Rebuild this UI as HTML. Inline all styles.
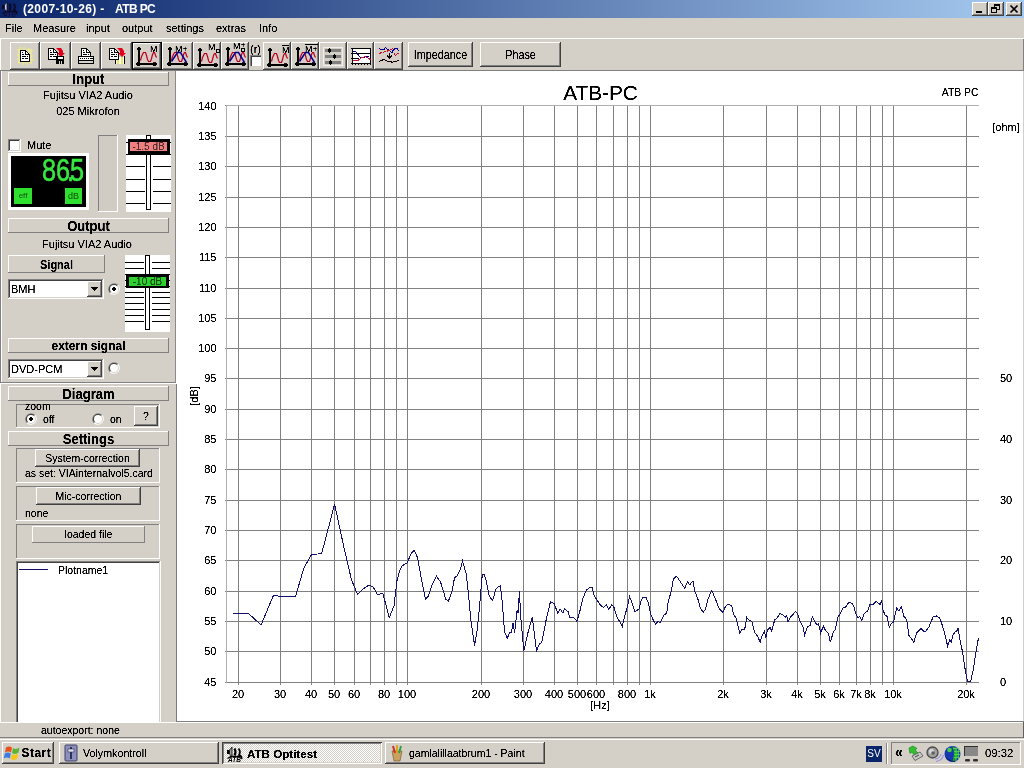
<!DOCTYPE html>
<html><head><meta charset="utf-8"><title>ATB PC</title>
<style>
html,body{margin:0;padding:0}
body{width:1024px;height:768px;position:relative;overflow:hidden;background:#d4d0c8;font-family:"Liberation Sans",sans-serif;font-size:11px;color:#000}
div,svg{position:absolute;box-sizing:border-box}
.t{white-space:nowrap;line-height:1;filter:url(#tf)}
text{filter:url(#tf)}
.b{font-weight:bold}
.r{background:#d4d0c8;box-shadow:inset -1px -1px #404040,inset 1px 1px #fff,inset -2px -2px #808080,inset 2px 2px #d4d0c8}
.p{background:#d4d0c8;box-shadow:inset 1px 1px #404040,inset -1px -1px #fff,inset 2px 2px #808080,inset -2px -2px #d4d0c8}
.s{background:#fff;box-shadow:inset -1px -1px #fff,inset 1px 1px #808080,inset -2px -2px #d4d0c8,inset 2px 2px #404040}
.h{background:#d4d0c8;box-shadow:inset -1px -1px #808080,inset 1px 1px #fff}
.g{box-shadow:inset -1px -1px #fff,inset 1px 1px #808080}
.c{text-align:center}
</style></head><body><div id="w" style="left:0;top:0;width:1024px;height:768px;will-change:transform"><svg width="0" height="0" style="left:0;top:0"><defs><filter id="tf" x="-5%" y="-20%" width="110%" height="140%" color-interpolation-filters="sRGB"><feComponentTransfer><feFuncA type="linear" slope="2.5" intercept="-0.5"/></feComponentTransfer></filter></defs></svg>
<div class="" style="left:0px;top:0px;width:1024px;height:18px;background:linear-gradient(to right,#0a246a 0%,#a6caf0 100%)"></div>
<svg style="left:2px;top:1px" width="17" height="17" viewBox="0 0 17 17"><rect x="0" y="4" width="2.5" height="4" fill="#0a0a28"/><path d="M2.5 4 L5 1 L5 11 L2.5 8Z" fill="#c8c8e0" stroke="#0a0a28" stroke-width="0.8"/><path d="M7.5 2.5 Q9.5 6 7.5 9.5" fill="none" stroke="#0a0a28" stroke-width="2.2"/><path d="M11.5 2.5 Q14 5.5 12 9 Q15 10 14.5 13" fill="none" stroke="#0a0a28" stroke-width="1.8"/><path d="M0.5 12.5 L4 10.5 L13 10.5" fill="none" stroke="#0a0a28" stroke-width="1.3"/><text x="1" y="16.4" font-size="6.5" font-weight="bold" font-style="italic" fill="#10103a" style="filter:none" font-family="Liberation Sans, sans-serif">ATB</text></svg>
<div class="t b" style="left:23px;top:3px;color:#fff;font-size:12px;letter-spacing:0.35px;filter:none">(2007-10-26) -&nbsp; <span style="margin-left:3px;letter-spacing:-0.6px">ATB PC</span></div>
<div class="r" style="left:972px;top:2px;width:16px;height:14px;"></div>
<div class="r" style="left:988px;top:2px;width:16px;height:14px;"></div>
<div class="r" style="left:1006px;top:2px;width:16px;height:14px;"></div>
<svg style="left:972px;top:2px" width="50" height="14" viewBox="0 0 50 14" shape-rendering="crispEdges"><rect x="4" y="9" width="6" height="2" fill="#000"/><rect x="22.5" y="2.5" width="5" height="5" fill="none" stroke="#000"/><rect x="22" y="2" width="6" height="2" fill="#000"/><rect x="19.5" y="5.5" width="5" height="5" fill="#d4d0c8" stroke="#000"/><rect x="19" y="5" width="6" height="2" fill="#000"/><path d="M38.5 3.5l7 7M45.5 3.5l-7 7" stroke="#000" stroke-width="1.7" fill="none" shape-rendering="auto"/></svg>
<div class="t" style="left:5px;top:23px;font-size:11px">File</div>
<div class="t" style="left:33px;top:23px;font-size:11px">Measure</div>
<div class="t" style="left:86px;top:23px;font-size:11px">input</div>
<div class="t" style="left:122px;top:23px;font-size:11px">output</div>
<div class="t" style="left:166px;top:23px;font-size:11px">settings</div>
<div class="t" style="left:216px;top:23px;font-size:11px">extras</div>
<div class="t" style="left:259px;top:23px;font-size:11px">Info</div>
<div class="" style="left:0px;top:38px;width:1024px;height:1px;background:#fff"></div>
<div class="" style="left:0px;top:70px;width:1024px;height:1px;background:#808080"></div>
<div class="" style="left:0px;top:39px;width:1px;height:31px;background:#fff"></div>
<div class="" style="left:1023px;top:39px;width:1px;height:31px;background:#808080"></div>
<div class="r" style="left:10px;top:42px;width:30px;height:28px;"></div>
<div class="r" style="left:40px;top:42px;width:31px;height:28px;"></div>
<div class="r" style="left:71px;top:42px;width:30px;height:28px;"></div>
<div class="r" style="left:101px;top:42px;width:31px;height:28px;"></div>
<div class="" style="left:132px;top:42px;width:30px;height:28px;background:#000"></div>
<div class="r" style="left:133px;top:43px;width:28px;height:26px;"></div>
<div class="r" style="left:162px;top:42px;width:31px;height:28px;"></div>
<div class="r" style="left:193px;top:42px;width:28px;height:28px;"></div>
<div class="r" style="left:221px;top:42px;width:28px;height:28px;"></div>
<div class="r" style="left:263px;top:42px;width:28px;height:28px;"></div>
<div class="r" style="left:291px;top:42px;width:28px;height:28px;"></div>
<div class="r" style="left:319px;top:42px;width:28px;height:28px;"></div>
<div class="r" style="left:347px;top:42px;width:27px;height:28px;"></div>
<div class="r" style="left:374px;top:42px;width:29px;height:28px;"></div>
<svg style="left:10px;top:42px" width="30" height="28" viewBox="10 42 30 28" shape-rendering="crispEdges" font-family="Liberation Sans, sans-serif"><g opacity="0.55"><rect x="17" y="49" width="2" height="2" fill="#f2f260"/><rect x="19" y="47" width="2" height="2" fill="#f2f260"/><rect x="23" y="47" width="2" height="2" fill="#f2f260"/><rect x="28" y="48" width="2" height="2" fill="#f2f260"/><rect x="31" y="50" width="2" height="2" fill="#f2f260"/><rect x="31" y="55" width="2" height="2" fill="#f2f260"/><rect x="32" y="59" width="2" height="2" fill="#f2f260"/><rect x="30" y="62" width="2" height="2" fill="#f2f260"/><rect x="26" y="63" width="2" height="2" fill="#f2f260"/><rect x="22" y="63" width="2" height="2" fill="#f2f260"/><rect x="18" y="62" width="2" height="2" fill="#f2f260"/><rect x="17" y="58" width="2" height="2" fill="#f2f260"/><rect x="17" y="54" width="2" height="2" fill="#f2f260"/></g><rect x="18" y="49" width="14" height="14" fill="#f6f68a" opacity="0.5"/><rect x="20" y="50" width="6" height="1" fill="#000"/><rect x="20" y="51" width="1" height="1" fill="#000"/><rect x="21" y="51" width="4" height="1" fill="#fff"/><rect x="25" y="51" width="2" height="1" fill="#000"/><rect x="20" y="52" width="1" height="1" fill="#000"/><rect x="21" y="52" width="1" height="1" fill="#fff"/><rect x="22" y="52" width="1" height="1" fill="#000"/><rect x="23" y="52" width="2" height="1" fill="#fff"/><rect x="25" y="52" width="1" height="1" fill="#000"/><rect x="26" y="52" width="1" height="1" fill="#fff"/><rect x="27" y="52" width="1" height="1" fill="#000"/><rect x="20" y="53" width="1" height="1" fill="#000"/><rect x="21" y="53" width="4" height="1" fill="#fff"/><rect x="25" y="53" width="1" height="1" fill="#000"/><rect x="26" y="53" width="2" height="1" fill="#fff"/><rect x="28" y="53" width="1" height="1" fill="#000"/><rect x="20" y="54" width="1" height="1" fill="#000"/><rect x="21" y="54" width="1" height="1" fill="#fff"/><rect x="22" y="54" width="2" height="1" fill="#000"/><rect x="24" y="54" width="1" height="1" fill="#fff"/><rect x="25" y="54" width="5" height="1" fill="#000"/><rect x="20" y="55" width="1" height="1" fill="#000"/><rect x="21" y="55" width="8" height="1" fill="#fff"/><rect x="29" y="55" width="1" height="1" fill="#000"/><rect x="20" y="56" width="1" height="1" fill="#000"/><rect x="21" y="56" width="1" height="1" fill="#fff"/><rect x="22" y="56" width="4" height="1" fill="#000"/><rect x="26" y="56" width="1" height="1" fill="#fff"/><rect x="27" y="56" width="1" height="1" fill="#000"/><rect x="28" y="56" width="1" height="1" fill="#fff"/><rect x="29" y="56" width="1" height="1" fill="#000"/><rect x="20" y="57" width="1" height="1" fill="#000"/><rect x="21" y="57" width="8" height="1" fill="#fff"/><rect x="29" y="57" width="1" height="1" fill="#000"/><rect x="20" y="58" width="1" height="1" fill="#000"/><rect x="21" y="58" width="1" height="1" fill="#fff"/><rect x="22" y="58" width="2" height="1" fill="#000"/><rect x="24" y="58" width="1" height="1" fill="#fff"/><rect x="25" y="58" width="3" height="1" fill="#000"/><rect x="28" y="58" width="1" height="1" fill="#fff"/><rect x="29" y="58" width="1" height="1" fill="#000"/><rect x="20" y="59" width="1" height="1" fill="#000"/><rect x="21" y="59" width="8" height="1" fill="#fff"/><rect x="29" y="59" width="1" height="1" fill="#000"/><rect x="20" y="60" width="1" height="1" fill="#000"/><rect x="21" y="60" width="8" height="1" fill="#fff"/><rect x="29" y="60" width="1" height="1" fill="#000"/><rect x="20" y="61" width="10" height="1" fill="#000"/></svg>
<svg style="left:40px;top:42px" width="31" height="28" viewBox="40 42 31 28" shape-rendering="crispEdges" font-family="Liberation Sans, sans-serif"><rect x="48" y="48" width="6" height="1" fill="#000"/><rect x="48" y="49" width="1" height="1" fill="#000"/><rect x="49" y="49" width="4" height="1" fill="#fff"/><rect x="53" y="49" width="2" height="1" fill="#000"/><rect x="48" y="50" width="1" height="1" fill="#000"/><rect x="49" y="50" width="1" height="1" fill="#fff"/><rect x="50" y="50" width="1" height="1" fill="#000"/><rect x="51" y="50" width="2" height="1" fill="#fff"/><rect x="53" y="50" width="1" height="1" fill="#000"/><rect x="54" y="50" width="1" height="1" fill="#fff"/><rect x="55" y="50" width="1" height="1" fill="#000"/><rect x="48" y="51" width="1" height="1" fill="#000"/><rect x="49" y="51" width="4" height="1" fill="#fff"/><rect x="53" y="51" width="1" height="1" fill="#000"/><rect x="54" y="51" width="2" height="1" fill="#fff"/><rect x="56" y="51" width="1" height="1" fill="#000"/><rect x="48" y="52" width="1" height="1" fill="#000"/><rect x="49" y="52" width="1" height="1" fill="#fff"/><rect x="50" y="52" width="2" height="1" fill="#000"/><rect x="52" y="52" width="1" height="1" fill="#fff"/><rect x="53" y="52" width="5" height="1" fill="#000"/><rect x="48" y="53" width="1" height="1" fill="#000"/><rect x="49" y="53" width="8" height="1" fill="#fff"/><rect x="57" y="53" width="1" height="1" fill="#000"/><rect x="48" y="54" width="1" height="1" fill="#000"/><rect x="49" y="54" width="1" height="1" fill="#fff"/><rect x="50" y="54" width="4" height="1" fill="#000"/><rect x="54" y="54" width="1" height="1" fill="#fff"/><rect x="55" y="54" width="1" height="1" fill="#000"/><rect x="56" y="54" width="1" height="1" fill="#fff"/><rect x="57" y="54" width="1" height="1" fill="#000"/><rect x="48" y="55" width="1" height="1" fill="#000"/><rect x="49" y="55" width="8" height="1" fill="#fff"/><rect x="57" y="55" width="1" height="1" fill="#000"/><rect x="48" y="56" width="1" height="1" fill="#000"/><rect x="49" y="56" width="1" height="1" fill="#fff"/><rect x="50" y="56" width="2" height="1" fill="#000"/><rect x="52" y="56" width="1" height="1" fill="#fff"/><rect x="53" y="56" width="3" height="1" fill="#000"/><rect x="56" y="56" width="1" height="1" fill="#fff"/><rect x="57" y="56" width="1" height="1" fill="#000"/><rect x="48" y="57" width="1" height="1" fill="#000"/><rect x="49" y="57" width="8" height="1" fill="#fff"/><rect x="57" y="57" width="1" height="1" fill="#000"/><rect x="48" y="58" width="1" height="1" fill="#000"/><rect x="49" y="58" width="8" height="1" fill="#fff"/><rect x="57" y="58" width="1" height="1" fill="#000"/><rect x="48" y="59" width="10" height="1" fill="#000"/><path d="M56 48h5l2 3v2h2l-4 4-4-4h2v-2z" fill="#e0001c" shape-rendering="auto"/><rect x="56" y="56" width="8" height="8" fill="#000"/><rect x="58" y="57" width="5" height="2" fill="#fff"/><rect x="59" y="61" width="3" height="3" fill="#d4d0c8"/><rect x="60" y="61" width="1" height="3" fill="#000"/></svg>
<svg style="left:71px;top:42px" width="30" height="28" viewBox="71 42 30 28" shape-rendering="crispEdges" font-family="Liberation Sans, sans-serif"><rect x="81" y="48" width="6" height="1" fill="#000"/><rect x="81" y="49" width="1" height="1" fill="#000"/><rect x="82" y="49" width="4" height="1" fill="#fff"/><rect x="86" y="49" width="2" height="1" fill="#000"/><rect x="81" y="50" width="1" height="1" fill="#000"/><rect x="82" y="50" width="1" height="1" fill="#fff"/><rect x="83" y="50" width="1" height="1" fill="#000"/><rect x="84" y="50" width="2" height="1" fill="#fff"/><rect x="86" y="50" width="1" height="1" fill="#000"/><rect x="87" y="50" width="1" height="1" fill="#fff"/><rect x="88" y="50" width="1" height="1" fill="#000"/><rect x="81" y="51" width="1" height="1" fill="#000"/><rect x="82" y="51" width="4" height="1" fill="#fff"/><rect x="86" y="51" width="1" height="1" fill="#000"/><rect x="87" y="51" width="2" height="1" fill="#fff"/><rect x="89" y="51" width="1" height="1" fill="#000"/><rect x="81" y="52" width="1" height="1" fill="#000"/><rect x="82" y="52" width="1" height="1" fill="#fff"/><rect x="83" y="52" width="2" height="1" fill="#000"/><rect x="85" y="52" width="1" height="1" fill="#fff"/><rect x="86" y="52" width="5" height="1" fill="#000"/><rect x="81" y="53" width="1" height="1" fill="#000"/><rect x="82" y="53" width="8" height="1" fill="#fff"/><rect x="90" y="53" width="1" height="1" fill="#000"/><rect x="81" y="54" width="1" height="1" fill="#000"/><rect x="82" y="54" width="1" height="1" fill="#fff"/><rect x="83" y="54" width="4" height="1" fill="#000"/><rect x="87" y="54" width="1" height="1" fill="#fff"/><rect x="88" y="54" width="1" height="1" fill="#000"/><rect x="89" y="54" width="1" height="1" fill="#fff"/><rect x="90" y="54" width="1" height="1" fill="#000"/><rect x="81" y="55" width="1" height="1" fill="#000"/><rect x="82" y="55" width="8" height="1" fill="#fff"/><rect x="90" y="55" width="1" height="1" fill="#000"/><rect x="81" y="56" width="1" height="1" fill="#000"/><rect x="82" y="56" width="1" height="1" fill="#fff"/><rect x="83" y="56" width="2" height="1" fill="#000"/><rect x="85" y="56" width="1" height="1" fill="#fff"/><rect x="86" y="56" width="3" height="1" fill="#000"/><rect x="89" y="56" width="1" height="1" fill="#fff"/><rect x="90" y="56" width="1" height="1" fill="#000"/><rect x="78" y="56" width="16" height="8" fill="#000"/><rect x="79" y="57" width="14" height="3" fill="#fff"/><rect x="79" y="61" width="14" height="2" fill="#d4d0c8"/><rect x="80" y="58" width="1" height="1" fill="#000"/><rect x="82" y="58" width="1" height="1" fill="#000"/><rect x="84" y="58" width="1" height="1" fill="#000"/><rect x="86" y="58" width="1" height="1" fill="#000"/><rect x="88" y="58" width="1" height="1" fill="#000"/><rect x="90" y="58" width="1" height="1" fill="#000"/><rect x="91" y="58" width="2" height="1" fill="#000"/></svg>
<svg style="left:101px;top:42px" width="31" height="28" viewBox="101 42 31 28" shape-rendering="crispEdges" font-family="Liberation Sans, sans-serif"><rect x="116" y="57" width="8" height="7" fill="#fff"/><rect x="115" y="56" width="1" height="8" fill="#000"/><rect x="124" y="56" width="1" height="8" fill="#000"/><rect x="117" y="57" width="2" height="7" fill="#e8e860"/><rect x="121" y="57" width="2" height="7" fill="#e8e860"/><rect x="109" y="48" width="6" height="1" fill="#000"/><rect x="109" y="49" width="1" height="1" fill="#000"/><rect x="110" y="49" width="4" height="1" fill="#fff"/><rect x="114" y="49" width="2" height="1" fill="#000"/><rect x="109" y="50" width="1" height="1" fill="#000"/><rect x="110" y="50" width="1" height="1" fill="#fff"/><rect x="111" y="50" width="1" height="1" fill="#000"/><rect x="112" y="50" width="2" height="1" fill="#fff"/><rect x="114" y="50" width="1" height="1" fill="#000"/><rect x="115" y="50" width="1" height="1" fill="#fff"/><rect x="116" y="50" width="1" height="1" fill="#000"/><rect x="109" y="51" width="1" height="1" fill="#000"/><rect x="110" y="51" width="4" height="1" fill="#fff"/><rect x="114" y="51" width="1" height="1" fill="#000"/><rect x="115" y="51" width="2" height="1" fill="#fff"/><rect x="117" y="51" width="1" height="1" fill="#000"/><rect x="109" y="52" width="1" height="1" fill="#000"/><rect x="110" y="52" width="1" height="1" fill="#fff"/><rect x="111" y="52" width="2" height="1" fill="#000"/><rect x="113" y="52" width="1" height="1" fill="#fff"/><rect x="114" y="52" width="5" height="1" fill="#000"/><rect x="109" y="53" width="1" height="1" fill="#000"/><rect x="110" y="53" width="8" height="1" fill="#fff"/><rect x="118" y="53" width="1" height="1" fill="#000"/><rect x="109" y="54" width="1" height="1" fill="#000"/><rect x="110" y="54" width="1" height="1" fill="#fff"/><rect x="111" y="54" width="4" height="1" fill="#000"/><rect x="115" y="54" width="1" height="1" fill="#fff"/><rect x="116" y="54" width="1" height="1" fill="#000"/><rect x="117" y="54" width="1" height="1" fill="#fff"/><rect x="118" y="54" width="1" height="1" fill="#000"/><rect x="109" y="55" width="1" height="1" fill="#000"/><rect x="110" y="55" width="8" height="1" fill="#fff"/><rect x="118" y="55" width="1" height="1" fill="#000"/><rect x="109" y="56" width="1" height="1" fill="#000"/><rect x="110" y="56" width="1" height="1" fill="#fff"/><rect x="111" y="56" width="2" height="1" fill="#000"/><rect x="113" y="56" width="1" height="1" fill="#fff"/><rect x="114" y="56" width="3" height="1" fill="#000"/><rect x="117" y="56" width="1" height="1" fill="#fff"/><rect x="118" y="56" width="1" height="1" fill="#000"/><rect x="109" y="57" width="1" height="1" fill="#000"/><rect x="110" y="57" width="8" height="1" fill="#fff"/><rect x="118" y="57" width="1" height="1" fill="#000"/><rect x="109" y="58" width="1" height="1" fill="#000"/><rect x="110" y="58" width="8" height="1" fill="#fff"/><rect x="118" y="58" width="1" height="1" fill="#000"/><rect x="109" y="59" width="10" height="1" fill="#000"/><path d="M117 48h5l2 3v2h2l-4 4-4-4h2v-2z" fill="#e0001c" shape-rendering="auto"/></svg>
<svg style="left:132px;top:42px" width="30" height="28" viewBox="132 42 30 28" shape-rendering="crispEdges" font-family="Liberation Sans, sans-serif"><rect x="138" y="48" width="2" height="16" fill="#000"/><rect x="137" y="48" width="4" height="2" fill="#000"/><rect x="138" y="47" width="2" height="1" fill="#000"/><rect x="137" y="63" width="19" height="2" fill="#000"/><rect x="153" y="62" width="3" height="4" fill="#000"/><rect x="136" y="63" width="1" height="2" fill="#000"/><rect x="137" y="62" width="3" height="4" fill="#000"/><rect x="156" y="63" width="1" height="2" fill="#000"/><rect x="140" y="51" width="17" height="12" fill="#ffb0c0" opacity="0.15"/><polyline points="140.5,60.5 141.5,56.5 143.5,52.5 145.5,52.5 146.5,55.5 147.5,59.5 148.5,61.5 150.5,61.5 151.5,58.5 152.5,54.5 153.5,52.5 154.5,52.5 155.5,55.5 156.5,57.5" fill="none" stroke="#b40018" stroke-width="1.2" shape-rendering="auto"/></svg>
<svg style="left:162px;top:42px" width="31" height="28" viewBox="162 42 31 28" shape-rendering="crispEdges" font-family="Liberation Sans, sans-serif"><rect x="169" y="48" width="2" height="16" fill="#000"/><rect x="168" y="48" width="4" height="2" fill="#000"/><rect x="169" y="47" width="2" height="1" fill="#000"/><rect x="168" y="63" width="19" height="2" fill="#000"/><rect x="184" y="62" width="3" height="4" fill="#000"/><rect x="167" y="63" width="1" height="2" fill="#000"/><rect x="168" y="62" width="3" height="4" fill="#000"/><rect x="187" y="63" width="1" height="2" fill="#000"/><rect x="171" y="51" width="17" height="12" fill="#ffb0c0" opacity="0.15"/><polyline points="171.5,60.5 172.5,56.5 174.5,52.5 176.5,52.5 177.5,55.5 178.5,59.5 179.5,61.5 181.5,61.5 182.5,58.5 183.5,54.5 184.5,52.5 185.5,52.5 186.5,55.5 187.5,57.5" fill="none" stroke="#b40018" stroke-width="1.2" shape-rendering="auto"/><polyline points="171.5,61.5 177.5,52.5 180.5,52.5 186.5,62.5" fill="none" stroke="#000090" stroke-width="1.5" shape-rendering="auto"/></svg>
<svg style="left:193px;top:42px" width="28" height="28" viewBox="193 42 28 28" shape-rendering="crispEdges" font-family="Liberation Sans, sans-serif"><rect x="199" y="49" width="2" height="16" fill="#000"/><rect x="198" y="49" width="4" height="2" fill="#000"/><rect x="199" y="48" width="2" height="1" fill="#000"/><rect x="198" y="64" width="19" height="2" fill="#000"/><rect x="214" y="63" width="3" height="4" fill="#000"/><rect x="197" y="64" width="1" height="2" fill="#000"/><rect x="198" y="63" width="3" height="4" fill="#000"/><rect x="217" y="64" width="1" height="2" fill="#000"/><rect x="201" y="52" width="17" height="12" fill="#ffb0c0" opacity="0.15"/><polyline points="201.5,61.5 202.5,57.5 204.5,53.5 206.5,53.5 207.5,56.5 208.5,60.5 209.5,62.5 211.5,62.5 212.5,59.5 213.5,55.5 214.5,53.5 215.5,53.5 216.5,56.5 217.5,58.5" fill="none" stroke="#b40018" stroke-width="1.2" shape-rendering="auto"/><rect x="216" y="49" width="4" height="4" fill="#000"/><rect x="217" y="50" width="2" height="2" fill="#d4d0c8"/></svg>
<svg style="left:221px;top:42px" width="28" height="28" viewBox="221 42 28 28" shape-rendering="crispEdges" font-family="Liberation Sans, sans-serif"><rect x="227" y="48" width="2" height="16" fill="#000"/><rect x="226" y="48" width="4" height="2" fill="#000"/><rect x="227" y="47" width="2" height="1" fill="#000"/><rect x="226" y="63" width="19" height="2" fill="#000"/><rect x="242" y="62" width="3" height="4" fill="#000"/><rect x="225" y="63" width="1" height="2" fill="#000"/><rect x="226" y="62" width="3" height="4" fill="#000"/><rect x="245" y="63" width="1" height="2" fill="#000"/><rect x="229" y="51" width="17" height="12" fill="#ffb0c0" opacity="0.15"/><polyline points="229.5,60.5 230.5,56.5 232.5,52.5 234.5,52.5 235.5,55.5 236.5,59.5 237.5,61.5 239.5,61.5 240.5,58.5 241.5,54.5 242.5,52.5 243.5,52.5 244.5,55.5 245.5,57.5" fill="none" stroke="#b40018" stroke-width="1.2" shape-rendering="auto"/><polyline points="229.5,61.5 235.5,52.5 238.5,52.5 244.5,62.5" fill="none" stroke="#000090" stroke-width="1.5" shape-rendering="auto"/><rect x="241" y="48" width="4" height="4" fill="#000"/><rect x="242" y="49" width="2" height="2" fill="#d4d0c8"/></svg>
<svg style="left:263px;top:42px" width="28" height="28" viewBox="263 42 28 28" shape-rendering="crispEdges" font-family="Liberation Sans, sans-serif"><rect x="269" y="49" width="2" height="16" fill="#000"/><rect x="268" y="49" width="4" height="2" fill="#000"/><rect x="269" y="48" width="2" height="1" fill="#000"/><rect x="268" y="64" width="19" height="2" fill="#000"/><rect x="284" y="63" width="3" height="4" fill="#000"/><rect x="267" y="64" width="1" height="2" fill="#000"/><rect x="268" y="63" width="3" height="4" fill="#000"/><rect x="287" y="64" width="1" height="2" fill="#000"/><rect x="271" y="52" width="17" height="12" fill="#ffb0c0" opacity="0.15"/><polyline points="271.5,61.5 272.5,57.5 274.5,53.5 276.5,53.5 277.5,56.5 278.5,60.5 279.5,62.5 281.5,62.5 282.5,59.5 283.5,55.5 284.5,53.5 285.5,53.5 286.5,56.5 287.5,58.5" fill="none" stroke="#b40018" stroke-width="1.2" shape-rendering="auto"/><rect x="282" y="45" width="7" height="1" fill="#000"/></svg>
<svg style="left:291px;top:42px" width="28" height="28" viewBox="291 42 28 28" shape-rendering="crispEdges" font-family="Liberation Sans, sans-serif"><rect x="297" y="48" width="2" height="16" fill="#000"/><rect x="296" y="48" width="4" height="2" fill="#000"/><rect x="297" y="47" width="2" height="1" fill="#000"/><rect x="296" y="63" width="19" height="2" fill="#000"/><rect x="312" y="62" width="3" height="4" fill="#000"/><rect x="295" y="63" width="1" height="2" fill="#000"/><rect x="296" y="62" width="3" height="4" fill="#000"/><rect x="315" y="63" width="1" height="2" fill="#000"/><rect x="299" y="51" width="17" height="12" fill="#ffb0c0" opacity="0.15"/><polyline points="299.5,60.5 300.5,56.5 302.5,52.5 304.5,52.5 305.5,55.5 306.5,59.5 307.5,61.5 309.5,61.5 310.5,58.5 311.5,54.5 312.5,52.5 313.5,52.5 314.5,55.5 315.5,57.5" fill="none" stroke="#b40018" stroke-width="1.2" shape-rendering="auto"/><polyline points="299.5,61.5 305.5,52.5 308.5,52.5 314.5,62.5" fill="none" stroke="#000090" stroke-width="1.5" shape-rendering="auto"/><rect x="305" y="44" width="13" height="1" fill="#000"/></svg>
<svg style="left:319px;top:42px" width="28" height="28" viewBox="319 42 28 28" shape-rendering="crispEdges" font-family="Liberation Sans, sans-serif"><rect x="323" y="47" width="20" height="19" fill="#f0f0ee"/><rect x="324" y="48" width="18" height="17" fill="#d4d0c8"/><rect x="325" y="49" width="16" height="3" fill="#808080"/><rect x="328" y="49" width="3" height="3" fill="#000"/><rect x="329" y="48" width="1" height="5" fill="#000"/><rect x="325" y="55" width="16" height="3" fill="#808080"/><rect x="333" y="55" width="3" height="3" fill="#000"/><rect x="334" y="54" width="1" height="5" fill="#000"/><rect x="325" y="61" width="16" height="3" fill="#808080"/><rect x="329" y="61" width="3" height="3" fill="#000"/><rect x="330" y="60" width="1" height="5" fill="#000"/></svg>
<svg style="left:347px;top:42px" width="27" height="28" viewBox="347 42 27 28" shape-rendering="crispEdges" font-family="Liberation Sans, sans-serif"><rect x="352" y="48" width="19" height="16" fill="#000"/><rect x="353" y="49" width="17" height="14" fill="#fff"/><rect x="353" y="53" width="17" height="1" fill="#000"/><rect x="353" y="58" width="6" height="1" fill="#000"/><rect x="352" y="63" width="1" height="2" fill="#000"/><rect x="355" y="63" width="1" height="2" fill="#000"/><rect x="358" y="63" width="1" height="2" fill="#000"/><rect x="361" y="63" width="1" height="2" fill="#000"/><rect x="364" y="63" width="1" height="2" fill="#000"/><rect x="367" y="63" width="1" height="2" fill="#000"/><rect x="370" y="63" width="1" height="2" fill="#000"/><rect x="351" y="48" width="1" height="1" fill="#000"/><rect x="351" y="53" width="1" height="1" fill="#000"/><rect x="351" y="58" width="1" height="1" fill="#000"/><rect x="351" y="63" width="1" height="1" fill="#000"/><polyline points="353,51 356,52 360,57 364,58 366,56 369,57" fill="none" stroke="#000080" stroke-width="1"/><polyline points="353,60.5 358,60.5 361,58 365,56.5 368,58 371,60" fill="none" stroke="#c01040" stroke-width="1"/></svg>
<svg style="left:374px;top:42px" width="29" height="28" viewBox="374 42 29 28" shape-rendering="crispEdges" font-family="Liberation Sans, sans-serif"><rect x="377" y="47" width="23" height="17" fill="#ffc0d0" opacity="0.12"/><polyline points="379,48.5 381,49.5 384,49.5 385.5,47.5 387,49 390,51 392,53 393,50.5 395,48.5 397,48.5 399,51" fill="none" stroke="#000090" stroke-width="1"/><polyline points="379,53.5 382,52.5 386,51.5 389,50.5 392,49 393,48.5" fill="none" stroke="#d01020" stroke-width="1" stroke-dasharray="3 1"/><polyline points="394,53 395.5,55.5 397,54 399,53" fill="none" stroke="#d01020" stroke-width="1"/><rect x="389" y="53" width="1" height="5" fill="#000"/><rect x="387" y="56" width="5" height="1" fill="#000"/><rect x="388" y="57" width="3" height="1" fill="#000"/><rect x="389" y="58" width="1" height="1" fill="#000"/><rect x="387" y="55" width="1" height="1" fill="#000"/><rect x="391" y="55" width="1" height="1" fill="#000"/><polyline points="379,61.5 381,60.5 384,59.5 386,60.5 388,61.5 391,61.5 392,62.5 394,61.5 397,61 399,60" fill="none" stroke="#000" stroke-width="1"/></svg>
<div class="t" style="left:150px;top:45px;font-size:9px">M</div>
<div class="t" style="left:175px;top:45px;font-size:9px">M+</div>
<div class="t" style="left:208px;top:43px;font-size:9px">M</div>
<div class="t" style="left:233px;top:42px;font-size:9px">M</div>
<div class="t" style="left:240.5px;top:41px;font-size:9px">+</div>
<div class="t" style="left:282px;top:46px;font-size:9px">M</div>
<div class="t" style="left:305px;top:45px;font-size:9px">M+</div>
<div class="r" style="left:408px;top:42px;width:65px;height:25px;"></div>
<div class="c t" style="left:408px;top:43px;width:65px;height:25px;line-height:25px;font-size:10.8px;transform:scaleY(1.12);transform-origin:50% 70%">Impedance</div>
<div class="r" style="left:480px;top:42px;width:81px;height:25px;"></div>
<div class="c t" style="left:480px;top:43px;width:81px;height:25px;line-height:25px;font-size:10.8px;transform:scaleY(1.12);transform-origin:50% 70%">Phase</div>
<div class="t" style="left:250px;top:44px;font-size:11px">(r)</div>
<div class="s" style="left:250px;top:55px;width:11px;height:11px;box-shadow:inset 1px 1px #808080,inset 2px 2px #404040"></div>
<div class="" style="left:0px;top:71px;width:1px;height:312px;background:#808080"></div>
<div class="" style="left:1px;top:71px;width:1px;height:311px;background:#fff"></div>
<div class="" style="left:0px;top:384px;width:1px;height:338px;background:#fff"></div>
<div class="" style="left:0px;top:382px;width:175px;height:1px;background:#808080"></div>
<div class="" style="left:0px;top:383px;width:177px;height:1px;background:#fff"></div>
<div class="h" style="left:8px;top:72px;width:161px;height:14px;"></div>
<div class="c t b" style="left:8px;top:72px;width:161px;height:14px;line-height:16px;font-size:13px;transform:scaleY(1.08);transform-origin:50% 75%">Input</div>
<div class="c t" style="left:0px;top:90px;width:176px;height:12px;font-size:11px">Fujitsu VIA2 Audio</div>
<div class="c t" style="left:0px;top:106px;width:176px;height:12px;font-size:11px">025 Mikrofon</div>
<div class="s" style="left:8px;top:139px;width:13px;height:13px;"></div>
<div class="t" style="left:27px;top:140px;font-size:11px">Mute</div>
<div class="" style="left:8px;top:153px;width:81px;height:57px;background:#fff"></div>
<div class="" style="left:11px;top:156px;width:75px;height:51px;background:#000"></div>
<div class="t" style="left:42px;top:154px;font-size:32px;color:#38e840;-webkit-text-stroke:0.6px #38e840;transform:scaleX(0.79);transform-origin:0 0;filter:none">8<span style="margin-left:0px">6</span><span style="margin:0 -5px 0 -4px">.</span>5</div>
<div class="c t" style="left:14px;top:188px;width:18px;height:16px;background:#2fe02f;font-size:8px;line-height:16px;color:#0a500a">eff</div>
<div class="c t" style="left:65px;top:188px;width:17px;height:16px;background:#2fe02f;font-size:9px;line-height:16px;color:#0a500a">dB</div>
<div class="g" style="left:98px;top:135px;width:20px;height:77px;background:#d0ccc4"></div>
<div class="" style="left:126px;top:135px;width:45px;height:77px;background:#fff"></div>
<svg style="left:126px;top:135px" width="45" height="77" viewBox="0 0 45 77" shape-rendering="crispEdges"><rect x="0" y="7" width="45" height="1" fill="#000"/><rect x="0" y="19" width="45" height="1" fill="#000"/><rect x="0" y="31" width="45" height="1" fill="#000"/><rect x="0" y="44" width="45" height="1" fill="#000"/><rect x="0" y="56" width="45" height="1" fill="#000"/><rect x="0" y="68" width="45" height="1" fill="#000"/><rect x="19" y="0" width="8" height="76" fill="#fff"/><rect x="20.5" y="0.5" width="4" height="74" fill="#fff" stroke="#000"/><rect x="2" y="4" width="42" height="16" fill="#000"/><rect x="4" y="7" width="37" height="9" fill="#f08080"/></svg>
<div class="c t" style="left:130px;top:142px;width:37px;height:9px;font-size:10px;line-height:9px;color:#503030">-1.5 dB</div>
<div class="h" style="left:8px;top:218px;width:161px;height:15px;"></div>
<div class="c t b" style="left:8px;top:218px;width:161px;height:15px;line-height:17px;font-size:13px;transform:scaleY(1.08);transform-origin:50% 75%">Output</div>
<div class="c t" style="left:-1px;top:239px;width:176px;height:12px;font-size:11px">Fujitsu VIA2 Audio</div>
<div class="h" style="left:8px;top:255px;width:97px;height:18px;"></div>
<div class="c t b" style="left:8px;top:255px;width:97px;height:18px;line-height:20px;font-size:11px;transform:scaleY(1.22);transform-origin:50% 75%">Signal</div>
<div class="s" style="left:8px;top:279px;width:96px;height:20px;"></div>
<div class="t" style="left:11px;top:284px;font-size:11px">BMH</div>
<div class="r" style="left:87px;top:281px;width:15px;height:16px;"></div>
<svg style="left:91px;top:287px" width="8" height="4" viewBox="0 0 8 4" shape-rendering="crispEdges"><path d="M0 0h7l-3.5 4z" fill="#000"/></svg>
<svg style="left:108px;top:283px" width="12" height="12" viewBox="0 0 12 12"><path d="M1.76 10.24 A6 6 0 0 1 10.24 1.76Z" fill="#808080"/><path d="M10.24 1.76 A6 6 0 0 1 1.76 10.24Z" fill="#ffffff"/><path d="M2.46 9.54 A5 5 0 0 1 9.54 2.46Z" fill="#404040"/><path d="M9.54 2.46 A5 5 0 0 1 2.46 9.54Z" fill="#d4d0c8"/><circle cx="6" cy="6" r="4" fill="#fff"/><rect x="5" y="4" width="2" height="4" fill="#000" shape-rendering="crispEdges"/><rect x="4" y="5" width="4" height="2" fill="#000" shape-rendering="crispEdges"/></svg>
<div class="" style="left:125px;top:255px;width:45px;height:77px;background:#fff"></div>
<svg style="left:125px;top:255px" width="45" height="77" viewBox="0 0 45 77" shape-rendering="crispEdges"><rect x="0" y="7" width="45" height="1" fill="#000"/><rect x="0" y="13" width="45" height="1" fill="#000"/><rect x="0" y="19" width="45" height="1" fill="#000"/><rect x="0" y="25" width="45" height="1" fill="#000"/><rect x="0" y="31" width="45" height="1" fill="#000"/><rect x="0" y="37" width="45" height="1" fill="#000"/><rect x="0" y="42" width="45" height="1" fill="#000"/><rect x="0" y="48" width="45" height="1" fill="#000"/><rect x="0" y="54" width="45" height="1" fill="#000"/><rect x="0" y="60" width="45" height="1" fill="#000"/><rect x="0" y="66" width="45" height="1" fill="#000"/><rect x="19" y="0" width="8" height="76" fill="#fff"/><rect x="20.5" y="0.5" width="4" height="74" fill="#fff" stroke="#000"/><rect x="1" y="19" width="43" height="14" fill="#000"/><rect x="4" y="22" width="37" height="9" fill="#30d030"/></svg>
<div class="c t" style="left:129px;top:277px;width:37px;height:9px;font-size:10px;line-height:9px;color:#105010">-10 dB</div>
<div class="h" style="left:8px;top:338px;width:161px;height:15px;"></div>
<div class="c t b" style="left:8px;top:338px;width:161px;height:15px;line-height:17px;font-size:12px;transform:scaleY(1.08);transform-origin:50% 75%">extern signal</div>
<div class="s" style="left:8px;top:359px;width:96px;height:20px;"></div>
<div class="t" style="left:11px;top:364px;font-size:11px">DVD-PCM</div>
<div class="r" style="left:87px;top:361px;width:15px;height:16px;"></div>
<svg style="left:91px;top:367px" width="8" height="4" viewBox="0 0 8 4" shape-rendering="crispEdges"><path d="M0 0h7l-3.5 4z" fill="#000"/></svg>
<svg style="left:108px;top:362px" width="12" height="12" viewBox="0 0 12 12"><path d="M1.76 10.24 A6 6 0 0 1 10.24 1.76Z" fill="#808080"/><path d="M10.24 1.76 A6 6 0 0 1 1.76 10.24Z" fill="#ffffff"/><path d="M2.46 9.54 A5 5 0 0 1 9.54 2.46Z" fill="#404040"/><path d="M9.54 2.46 A5 5 0 0 1 2.46 9.54Z" fill="#d4d0c8"/><circle cx="6" cy="6" r="4" fill="#fff"/></svg>
<div class="h" style="left:8px;top:386px;width:161px;height:15px;"></div>
<div class="c t b" style="left:8px;top:386px;width:161px;height:15px;line-height:17px;font-size:13px;transform:scaleY(1.08);transform-origin:50% 75%">Diagram</div>
<div class="g" style="left:16px;top:404px;width:144px;height:24px;"></div>
<div class="t" style="left:25px;top:401px;font-size:10.5px;transform:scaleY(1.12);transform-origin:50% 78%">zoom</div>
<svg style="left:25px;top:413px" width="12" height="12" viewBox="0 0 12 12"><path d="M1.76 10.24 A6 6 0 0 1 10.24 1.76Z" fill="#808080"/><path d="M10.24 1.76 A6 6 0 0 1 1.76 10.24Z" fill="#ffffff"/><path d="M2.46 9.54 A5 5 0 0 1 9.54 2.46Z" fill="#404040"/><path d="M9.54 2.46 A5 5 0 0 1 2.46 9.54Z" fill="#d4d0c8"/><circle cx="6" cy="6" r="4" fill="#fff"/><rect x="5" y="4" width="2" height="4" fill="#000" shape-rendering="crispEdges"/><rect x="4" y="5" width="4" height="2" fill="#000" shape-rendering="crispEdges"/></svg>
<div class="t" style="left:43px;top:414px;font-size:10.5px;transform:scaleY(1.12);transform-origin:50% 78%">off</div>
<svg style="left:92px;top:413px" width="12" height="12" viewBox="0 0 12 12"><path d="M1.76 10.24 A6 6 0 0 1 10.24 1.76Z" fill="#808080"/><path d="M10.24 1.76 A6 6 0 0 1 1.76 10.24Z" fill="#ffffff"/><path d="M2.46 9.54 A5 5 0 0 1 9.54 2.46Z" fill="#404040"/><path d="M9.54 2.46 A5 5 0 0 1 2.46 9.54Z" fill="#d4d0c8"/><circle cx="6" cy="6" r="4" fill="#fff"/></svg>
<div class="t" style="left:110px;top:414px;font-size:10.5px;transform:scaleY(1.12);transform-origin:50% 78%">on</div>
<div class="r" style="left:134px;top:406px;width:24px;height:20px;"></div>
<div class="c t" style="left:134px;top:406px;width:24px;height:20px;line-height:20px;font-size:10.5px;transform:scaleY(1.12);transform-origin:50% 78%">?</div>
<div class="h" style="left:8px;top:431px;width:161px;height:15px;"></div>
<div class="c t b" style="left:8px;top:431px;width:161px;height:15px;line-height:17px;font-size:13px;transform:scaleY(1.08);transform-origin:50% 75%">Settings</div>
<div class="g" style="left:16px;top:448px;width:144px;height:35px;"></div>
<div class="r" style="left:35px;top:449px;width:105px;height:18px;"></div>
<div class="c t" style="left:35px;top:449px;width:105px;height:18px;line-height:18px;font-size:10.5px;transform:scaleY(1.12);transform-origin:50% 78%">System-correction</div>
<div class="t" style="left:25px;top:468px;font-size:10.5px;transform:scaleY(1.12);transform-origin:50% 78%">as set: VIAinternalvol5.card</div>
<div class="g" style="left:16px;top:486px;width:144px;height:35px;"></div>
<div class="r" style="left:36px;top:487px;width:105px;height:18px;"></div>
<div class="c t" style="left:36px;top:487px;width:105px;height:18px;line-height:18px;font-size:10.5px;transform:scaleY(1.12);transform-origin:50% 78%">Mic-correction</div>
<div class="t" style="left:25px;top:508px;font-size:10.5px;transform:scaleY(1.12);transform-origin:50% 78%">none</div>
<div class="g" style="left:16px;top:524px;width:144px;height:35px;"></div>
<div class="h" style="left:32px;top:526px;width:113px;height:17px;"></div>
<div class="c t" style="left:32px;top:526px;width:113px;height:17px;line-height:17px;font-size:10.5px;transform:scaleY(1.12);transform-origin:50% 78%">loaded file</div>
<div class="s" style="left:16px;top:561px;width:145px;height:164px;"></div>
<div class="" style="left:19px;top:569px;width:29px;height:1px;background:#10106c"></div>
<div class="t" style="left:58px;top:565px;font-size:10.5px;transform:scaleY(1.12);transform-origin:50% 78%">Plotname1</div>
<div class="" style="left:176px;top:71px;width:848px;height:650px;background:#fff"></div>
<div class="" style="left:175px;top:71px;width:1px;height:312px;background:#8a8a8a"></div>
<div class="" style="left:175px;top:384px;width:2px;height:338px;background:#d4d0c8"></div>
<div class="" style="left:176px;top:384px;width:1px;height:338px;background:#7a7a7a"></div>
<div class="" style="left:176px;top:721px;width:848px;height:1px;background:#808080"></div>
<div class="" style="left:1023px;top:71px;width:1px;height:650px;background:#d4d0c8"></div>
<svg style="left:0;top:0" width="1024" height="768" viewBox="0 0 1024 768" shape-rendering="crispEdges" font-family="Liberation Sans, sans-serif" font-size="11"><rect x="225" y="105" width="754" height="1" fill="#808080"/><rect x="225" y="136" width="754" height="1" fill="#808080"/><rect x="225" y="166" width="754" height="1" fill="#808080"/><rect x="225" y="197" width="754" height="1" fill="#808080"/><rect x="225" y="227" width="754" height="1" fill="#808080"/><rect x="225" y="257" width="754" height="1" fill="#808080"/><rect x="225" y="288" width="754" height="1" fill="#808080"/><rect x="225" y="318" width="754" height="1" fill="#808080"/><rect x="225" y="348" width="754" height="1" fill="#808080"/><rect x="225" y="378" width="754" height="1" fill="#808080"/><rect x="225" y="409" width="754" height="1" fill="#808080"/><rect x="225" y="439" width="754" height="1" fill="#808080"/><rect x="225" y="469" width="754" height="1" fill="#808080"/><rect x="225" y="500" width="754" height="1" fill="#808080"/><rect x="225" y="530" width="754" height="1" fill="#808080"/><rect x="225" y="560" width="754" height="1" fill="#808080"/><rect x="225" y="591" width="754" height="1" fill="#808080"/><rect x="225" y="621" width="754" height="1" fill="#808080"/><rect x="225" y="651" width="754" height="1" fill="#808080"/><rect x="225" y="682" width="754" height="1" fill="#808080"/><rect x="238" y="105" width="1" height="580" fill="#808080"/><rect x="280" y="105" width="1" height="580" fill="#808080"/><rect x="311" y="105" width="1" height="580" fill="#808080"/><rect x="334" y="105" width="1" height="580" fill="#808080"/><rect x="354" y="105" width="1" height="580" fill="#808080"/><rect x="370" y="105" width="1" height="580" fill="#808080"/><rect x="384" y="105" width="1" height="580" fill="#808080"/><rect x="396" y="105" width="1" height="580" fill="#808080"/><rect x="407" y="105" width="1" height="580" fill="#808080"/><rect x="481" y="105" width="1" height="580" fill="#808080"/><rect x="523" y="105" width="1" height="580" fill="#808080"/><rect x="554" y="105" width="1" height="580" fill="#808080"/><rect x="577" y="105" width="1" height="580" fill="#808080"/><rect x="596" y="105" width="1" height="580" fill="#808080"/><rect x="613" y="105" width="1" height="580" fill="#808080"/><rect x="627" y="105" width="1" height="580" fill="#808080"/><rect x="639" y="105" width="1" height="580" fill="#808080"/><rect x="650" y="105" width="1" height="580" fill="#808080"/><rect x="723" y="105" width="1" height="580" fill="#808080"/><rect x="766" y="105" width="1" height="580" fill="#808080"/><rect x="797" y="105" width="1" height="580" fill="#808080"/><rect x="820" y="105" width="1" height="580" fill="#808080"/><rect x="839" y="105" width="1" height="580" fill="#808080"/><rect x="856" y="105" width="1" height="580" fill="#808080"/><rect x="870" y="105" width="1" height="580" fill="#808080"/><rect x="882" y="105" width="1" height="580" fill="#808080"/><rect x="893" y="105" width="1" height="580" fill="#808080"/><rect x="966" y="105" width="1" height="580" fill="#808080"/><rect x="226" y="105" width="1" height="578" fill="#b0b0b0"/><rect x="226" y="105" width="753" height="1" fill="#b0b0b0"/><polyline points="233.0,613.2 248.1,613.2 261.1,624.9 273.4,595.5 280.4,596.3 295.5,596.3 303.9,568.1 311.7,554.3 321.6,553.8 334.6,504.3 344.5,549.9 351.5,579.8 357.5,594.2 363.2,589.0 369.0,585.0 373.1,586.9 377.6,594.7 382.8,593.1 389.3,617.6 394.0,605.9 397.1,579.8 400.0,569.6 402.1,565.8 407.3,562.9 410.8,554.0 414.2,550.2 417.7,558.1 420.8,575.8 425.4,599.2 428.1,596.3 432.3,584.2 436.5,576.3 440.6,582.1 445.8,599.2 448.3,601.3 451.7,592.5 454.6,577.5 457.3,575.8 460.4,569.6 462.5,560.8 466.2,573.8 468.3,592.5 470.8,619.6 474.6,645.6 477.5,627.9 480.2,598.8 482.3,574.2 484.4,574.8 486.5,582.1 489.2,596.2 492.7,600.4 496.2,588.3 500.4,585.8 502.1,600.8 504.6,632.1 507.3,638.3 509.4,633.1 511.5,632.1 513.1,622.7 514.6,633.1 517.1,610.2 518.1,613.3 519.4,591.5 520.8,617.5 523.8,650.8 528.1,632.1 532.3,617.5 536.5,650.8 539.2,644.2 541.7,642.5 546.2,619.6 550.4,601.9 554.2,603.3 557.7,613.3 560.2,609.2 562.9,612.9 564.6,608.8 568.1,611.7 569.8,617.1 573.8,617.5 576.9,621.2 579.6,612.3 582.7,598.8 586.2,590.4 590.0,587.3 592.1,587.3 594.2,596.2 597.3,600.4 600.4,605.0 603.5,607.5 606.2,604.6 608.8,609.2 611.9,604.6 614.0,607.5 617.1,617.1 620.2,622.7 622.3,626.9 623.8,619.6 627.1,607.5 629.6,596.7 631.7,601.9 634.8,611.7 639.0,609.2 641.0,600.8 643.1,597.1 646.2,597.7 648.3,602.9 650.8,614.4 653.5,620.6 655.6,624.2 658.1,621.2 660.4,622.7 664.0,615.0 666.7,613.3 668.1,601.9 671.2,591.5 673.3,579.0 676.5,576.2 678.5,579.0 681.7,583.8 684.7,588.1 687.6,582.1 689.7,584.7 693.0,581.0 694.9,591.5 698.0,599.5 700.5,608.5 703.3,612.3 705.4,609.2 708.1,598.8 711.7,590.4 715.4,598.8 719.2,608.8 722.7,612.3 725.8,606.0 728.3,604.0 731.7,606.0 733.8,615.0 735.8,617.5 737.9,625.8 739.8,633.5 742.1,629.0 744.6,630.0 746.7,617.5 748.8,620.0 751.9,621.2 754.6,632.1 757.5,636.2 760.2,642.1 762.3,635.2 764.4,631.0 765.8,637.9 767.5,630.0 770.0,627.5 771.7,631.0 774.8,619.6 776.9,618.5 780.0,613.3 783.1,615.0 785.2,617.5 786.7,615.4 787.9,621.7 790.4,617.1 792.5,615.0 795.6,611.2 797.7,614.4 799.8,620.6 802.9,626.9 804.6,635.2 807.5,626.9 810.2,625.4 812.3,617.1 815.4,622.7 817.1,624.8 818.5,623.3 820.6,633.1 823.3,626.2 825.8,631.0 828.3,633.1 830.4,642.3 833.1,632.6 835.5,629.0 837.6,618.0 840.0,613.8 843.5,607.5 845.6,607.1 848.8,602.5 851.9,603.3 854.0,606.7 856.0,614.4 858.1,617.9 859.8,616.5 861.7,620.6 864.4,613.3 867.5,611.2 870.0,604.0 872.7,605.0 876.2,601.2 880.0,604.6 881.7,601.2 883.1,610.2 885.2,615.4 886.7,615.0 889.4,627.5 891.5,623.3 893.5,622.1 896.7,608.1 898.8,610.8 901.5,606.7 904.0,616.5 906.7,619.6 908.8,635.2 911.2,638.3 913.8,642.5 916.5,633.1 918.5,631.0 921.0,628.3 923.8,631.5 925.8,631.0 929.0,626.9 931.0,621.7 933.1,617.1 936.2,615.8 939.4,617.9 941.5,622.7 944.2,632.1 947.7,646.2 949.8,639.4 951.2,642.5 952.9,635.2 955.0,632.1 956.7,631.0 958.1,628.3 959.6,638.3 962.3,650.8 965.0,668.5 967.5,681.0 970.6,681.7 973.3,669.6 975.8,652.9 978.5,637.9" fill="none" stroke="#10106c" stroke-width="1"/><text x="216.5" y="110" text-anchor="end">140</text><text x="216.5" y="140" text-anchor="end">135</text><text x="216.5" y="170" text-anchor="end">130</text><text x="216.5" y="201" text-anchor="end">125</text><text x="216.5" y="231" text-anchor="end">120</text><text x="216.5" y="261" text-anchor="end">115</text><text x="216.5" y="292" text-anchor="end">110</text><text x="216.5" y="322" text-anchor="end">105</text><text x="216.5" y="352" text-anchor="end">100</text><text x="216.5" y="382" text-anchor="end">95</text><text x="216.5" y="413" text-anchor="end">90</text><text x="216.5" y="443" text-anchor="end">85</text><text x="216.5" y="473" text-anchor="end">80</text><text x="216.5" y="504" text-anchor="end">75</text><text x="216.5" y="534" text-anchor="end">70</text><text x="216.5" y="564" text-anchor="end">65</text><text x="216.5" y="595" text-anchor="end">60</text><text x="216.5" y="625" text-anchor="end">55</text><text x="216.5" y="655" text-anchor="end">50</text><text x="216.5" y="686" text-anchor="end">45</text><text x="1000" y="382">50</text><text x="1000" y="443">40</text><text x="1000" y="504">30</text><text x="1000" y="564">20</text><text x="1000" y="625">10</text><text x="1000" y="686">0</text><text x="238" y="698" text-anchor="middle">20</text><text x="280" y="698" text-anchor="middle">30</text><text x="311" y="698" text-anchor="middle">40</text><text x="334" y="698" text-anchor="middle">50</text><text x="354" y="698" text-anchor="middle">60</text><text x="384" y="698" text-anchor="middle">80</text><text x="407" y="698" text-anchor="middle">100</text><text x="481" y="698" text-anchor="middle">200</text><text x="523" y="698" text-anchor="middle">300</text><text x="554" y="698" text-anchor="middle">400</text><text x="577" y="698" text-anchor="middle">500</text><text x="596" y="698" text-anchor="middle">600</text><text x="627" y="698" text-anchor="middle">800</text><text x="650" y="698" text-anchor="middle">1k</text><text x="723" y="698" text-anchor="middle">2k</text><text x="766" y="698" text-anchor="middle">3k</text><text x="797" y="698" text-anchor="middle">4k</text><text x="820" y="698" text-anchor="middle">5k</text><text x="839" y="698" text-anchor="middle">6k</text><text x="856" y="698" text-anchor="middle">7k</text><text x="870" y="698" text-anchor="middle">8k</text><text x="893" y="698" text-anchor="middle">10k</text><text x="966" y="698" text-anchor="middle">20k</text><text x="600" y="709" text-anchor="middle">[Hz]</text><text x="1006" y="131" text-anchor="middle">[ohm]</text><text x="978.5" y="96" text-anchor="end" font-size="10.4">ATB PC</text><text x="600.5" y="100" text-anchor="middle" font-size="20.8">ATB-PC</text><text transform="translate(198,396) rotate(-90)" text-anchor="middle">[dB]</text></svg>
<div class="" style="left:0px;top:722px;width:1024px;height:46px;background:#d4d0c8"></div>
<div class="t" style="left:41px;top:725px;font-size:10.5px;transform:scaleY(1.12);transform-origin:50% 78%">autoexport: none</div>
<div class="" style="left:0px;top:722px;width:1024px;height:1px;background:#fff"></div>
<div class="" style="left:0px;top:737px;width:1024px;height:1px;background:#808080"></div>
<div class="" style="left:1023px;top:722px;width:1px;height:16px;background:#606060"></div>
<div class="" style="left:0px;top:739px;width:1024px;height:1px;background:#fff"></div>
<div class="r" style="left:2px;top:742px;width:52px;height:22px;"></div>
<svg style="left:4px;top:744px" width="17" height="17" viewBox="0 0 17 17"><path d="M2 3.5 Q5 1.5 8 3.5 L7 8.5 Q4 6.5 1 8.5Z" fill="#e8501c"/><path d="M9 4 Q12 6 15.5 3.5 L14.5 8.5 Q11.5 11 8 9Z" fill="#5cb531"/><path d="M0.8 9.5 Q3.8 7.5 6.8 9.5 L5.8 14.5 Q2.8 12.5 -0.2 14.5Z" fill="#3a7fe0"/><path d="M7.8 10 Q10.8 12 14.3 9.5 L13.3 14.5 Q10.3 17 6.8 15Z" fill="#f5c61a"/></svg>
<div class="t b" style="left:21.5px;top:747px;font-size:12px;letter-spacing:0.45px">Start</div>
<div class="r" style="left:59px;top:742px;width:160px;height:22px;"></div>
<svg style="left:63px;top:744px" width="16" height="18" viewBox="0 0 16 18"><rect x="2" y="1" width="12" height="16" rx="1" fill="#8a8fc0" stroke="#404060"/><rect x="7" y="3" width="2" height="12" fill="#303050"/><rect x="5" y="5" width="6" height="3" fill="#e0e0f0" stroke="#303050" stroke-width="0.6"/></svg>
<div class="t" style="left:83px;top:748px;font-size:10.7px">Volymkontroll</div>
<div class="" style="left:222px;top:742px;width:160px;height:22px;background:repeating-conic-gradient(#fff 0 25%,#d4d0c8 0 50%) 0 0/2px 2px"></div>
<div class="" style="left:222px;top:742px;width:160px;height:22px;box-shadow:inset 1px 1px #404040,inset -1px -1px #fff,inset 2px 2px #808080,inset -2px -2px #d4d0c8"></div>
<svg style="left:227px;top:746px" width="17" height="17" viewBox="0 0 17 17"><rect x="0" y="4" width="2.5" height="4" fill="#000"/><path d="M2.5 4 L5 1 L5 11 L2.5 8Z" fill="#a0a0a0" stroke="#000" stroke-width="0.8"/><path d="M7.5 2.5 Q9.5 6 7.5 9.5" fill="none" stroke="#000" stroke-width="2.2"/><path d="M11.5 2.5 Q14 5.5 12 9 Q15 10 14.5 13" fill="none" stroke="#000" stroke-width="1.8"/><path d="M0.5 12.5 L4 10.5 L13 10.5" fill="none" stroke="#000" stroke-width="1.3"/><text x="1" y="16.4" font-size="6.5" font-weight="bold" font-style="italic" fill="#000" style="filter:none" font-family="Liberation Sans, sans-serif">ATB</text></svg>
<div class="t b" style="left:247px;top:748px;font-size:11.6px">ATB Optitest</div>
<div class="r" style="left:385px;top:742px;width:160px;height:22px;"></div>
<svg style="left:389px;top:744px" width="16" height="18" viewBox="0 0 16 18"><path d="M3 7 L13 7 L11 17 L5 17Z" fill="#c8a060" stroke="#705020" stroke-width="0.6"/><path d="M4 2 L6 9" stroke="#d03020" stroke-width="2"/><path d="M8 1 L8 9" stroke="#e0a020" stroke-width="2"/><path d="M12 2 L10 9" stroke="#30a040" stroke-width="2"/></svg>
<div class="t" style="left:409px;top:748px;font-size:10.5px">gamlalillaatbrum1 - Paint</div>
<div class="c t" style="left:866px;top:746px;width:16px;height:16px;background:#0a246a;color:#fff;font-size:10px;line-height:16px;filter:none">SV</div>
<div class="" style="left:886px;top:743px;width:1px;height:21px;background:#808080"></div>
<div class="" style="left:887px;top:743px;width:1px;height:21px;background:#fff"></div>
<div class="g" style="left:891px;top:742px;width:130px;height:23px;"></div>
<div class="t b" style="left:895px;top:745px;font-size:14px">«</div>
<svg style="left:906px;top:744px" width="76" height="20" viewBox="906 744 76 20"><path d="M913 746 L917 748.5 L915 750 L918 753 L914.5 755.5 L912 752 L910 753.5 L909 748Z" fill="#30c030" stroke="#108010" stroke-width="0.6"/><path d="M912 756 L920 752 L923 756 L915 760.5Z" fill="#c8c8c8" stroke="#505050" stroke-width="0.8"/><path d="M915 757 L919 755" stroke="#404040" stroke-width="1"/><circle cx="932.5" cy="752.5" r="5.5" fill="#a0a0a0" stroke="#484848" stroke-width="1.3"/><circle cx="931.5" cy="751.5" r="2.5" fill="#d8d8d8"/><circle cx="933" cy="753" r="1.8" fill="#606060"/><path d="M935 759 Q940 758.5 941 754 M936 761.5 Q942.5 760.5 943.5 755" fill="none" stroke="#9090e0" stroke-width="1.1"/><circle cx="952.5" cy="754" r="8" fill="#1838b0"/><path d="M952 746.2 A8 8 0 0 1 952 761.8 Q956 754 952 746.2Z" fill="#18a028"/><circle cx="949.5" cy="750" r="2.3" fill="#40d040"/><path d="M953 748.5 H959 M954 751.5 H960.3 M954 754.5 H960.4 M953.5 757.5 H959.5 M956 747 V761 M958.5 748.5 V759.5" stroke="#60e060" stroke-width="0.7" fill="none"/><path d="M946 758 Q950 762 955 761.5" stroke="#0a1a60" stroke-width="1" fill="none"/><rect x="964" y="746" width="14" height="10" fill="#888"/><rect x="964" y="746" width="14" height="1" fill="#303030"/><rect x="964" y="746" width="1" height="10" fill="#303030"/><rect x="965" y="759" width="5" height="2.5" rx="1" fill="#303030"/><rect x="973" y="759" width="5" height="2.5" rx="1" fill="#303030"/></svg>
<div class="t" style="left:985px;top:748px;font-size:11.3px">09:32</div>
</div></body></html>
